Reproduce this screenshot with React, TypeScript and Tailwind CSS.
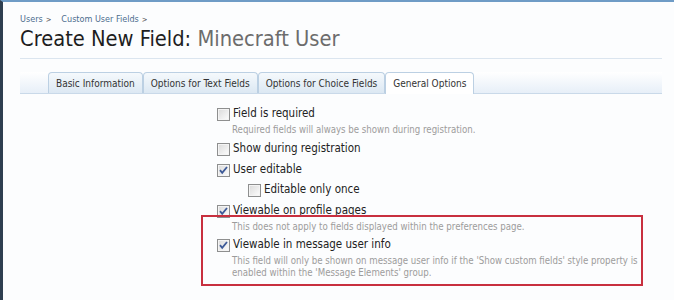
import React from 'react'

const font = { fontFamily: '"DejaVu Sans Condensed", "DejaVu Sans", sans-serif' }

const Box = ({ checked }: { checked?: boolean }) => (
  <svg width="13" height="13" viewBox="0 0 13 13" className="shrink-0">
    <defs>
      <linearGradient id="cbg" x1="0" y1="0" x2="1" y2="1">
        <stop offset="0" stopColor="#d8d8d8" />
        <stop offset="1" stopColor="#ffffff" />
      </linearGradient>
    </defs>
    <rect x="0.5" y="0.5" width="12" height="12" fill="url(#cbg)" stroke="#8e8f8f" />
    <rect x="1.5" y="1.5" width="10" height="10" fill="none" stroke="#f4f4f4" />
    {checked && (
      <path d="M3 6.2 L5.2 8.8 L10 3" fill="none" stroke="#3d5a98" strokeWidth="1.8" />
    )}
  </svg>
)

const Option = ({ label, checked, indent }: { label: string; checked?: boolean; indent?: boolean }) => (
  <div className={`flex items-center h-5 gap-[3px] ${indent ? 'ml-[31px]' : ''}`}>
    <Box checked={checked} />
    <span className="text-[11.5px] text-[#222]">{label}</span>
  </div>
)

const Hint = ({ children }: { children: React.ReactNode }) => (
  <p className="ml-[15px] text-[9.6px] leading-[12px] text-[#9c9c9c]">{children}</p>
)

const tabs = ['Basic Information', 'Options for Text Fields', 'Options for Choice Fields', 'General Options']

export default function App() {
  return (
    <div
      className="relative w-[674px] h-[300px] overflow-hidden bg-[#fcfdfe] border-t-2 border-t-[#6f9cc6] border-l-[3px] border-l-[#2f3f50]"
      style={font}
    >
      <div className="pl-[17px] pr-[12px]">
        <div className="pt-[10px] flex items-center h-[26px] text-[9px] text-[#4d6d8e]">
          <span>Users</span>
          <span className="ml-[3px] text-[7.5px] text-[#555]">&gt;</span>
          <span className="ml-[10px]">Custom User Fields</span>
          <span className="ml-[3px] text-[7.5px] text-[#555]">&gt;</span>
        </div>
        <h1 className="text-[21.7px] leading-[21px] text-[#1e1e1e]">
          Create New Field: <span className="text-[#6c6c6c]">Minecraft User</span>
        </h1>
        <div className="mt-[9px] h-px bg-[#dbe5ef]" />
        <div className="mt-[13px] flex items-end h-[22px] pl-[28px] border-b border-[#c9d9e9] bg-gradient-to-b from-white to-[#e7eff8]">
          {tabs.map((t, i) =>
            i === 3 ? (
              <div
                key={t}
                className="-mb-px h-[22px] px-[7px] flex items-center text-[10px] text-[#333] bg-white border border-b-0 border-[#bcd0e3] rounded-t-[4px]"
              >
                {t}
              </div>
            ) : (
              <div
                key={t}
                className="h-[21px] px-[7px] flex items-center text-[10px] text-[#333] bg-gradient-to-b from-[#f5f9fc] to-[#dce8f3] border border-b-0 border-[#bcd0e3] rounded-t-[4px]"
              >
                {t}
              </div>
            )
          )}
        </div>
        <div className="ml-[197px] pt-[10px]">
          <Option label="Field is required" />
          <Hint>Required fields will always be shown during registration.</Hint>
          <div className="mt-[3px]" />
          <Option label="Show during registration" />
          <div className="mt-px" />
          <Option label="User editable" checked />
          <Option label="Editable only once" indent />
          <div className="mt-px" />
          <Option label="Viewable on profile pages" checked />
          <Hint>This does not apply to fields displayed within the preferences page.</Hint>
          <div className="mt-[2px]" />
          <Option label="Viewable in message user info" checked />
          <Hint>
            This field will only be shown on message user info if the 'Show custom fields' style property is
            <br />
            enabled within the 'Message Elements' group.
          </Hint>
        </div>
      </div>
      <div className="absolute left-[198px] top-[213px] w-[442px] h-[71px] border-2 border-[#c8303f]" />
    </div>
  )
}
